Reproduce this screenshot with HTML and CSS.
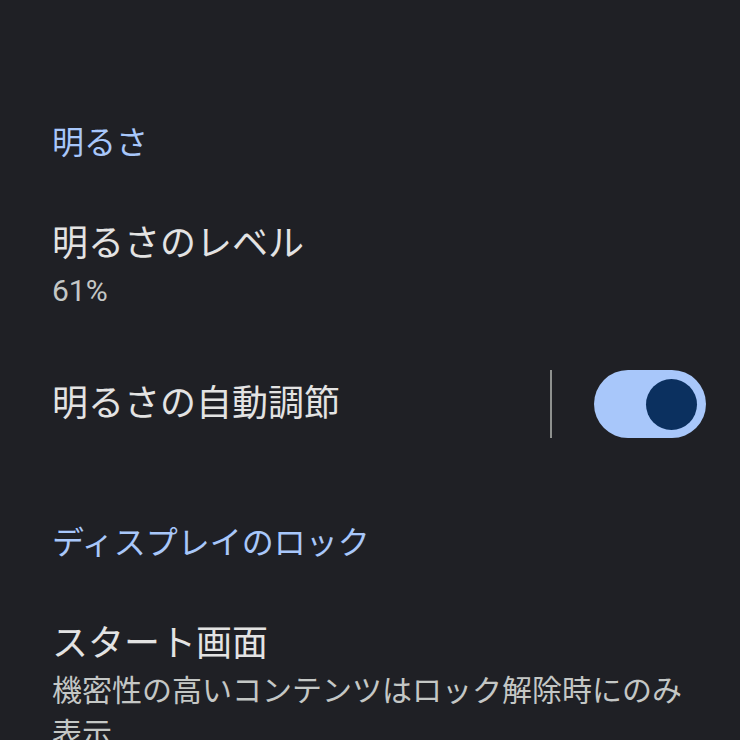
FILE: index.html
```html
<!DOCTYPE html>
<html lang="ja">
<head>
<meta charset="utf-8">
<title>ディスプレイ</title>
<link rel="stylesheet" href="styles.css">
</head>
<body>
<main class="settings">
  <h2 class="section-header">明るさ</h2>
  <div class="row">
    <div class="row-text">
      <div class="row-title">明るさのレベル</div>
      <div class="row-summary">61%</div>
    </div>
  </div>
  <div class="row">
    <div class="row-text">
      <div class="row-title">明るさの自動調節</div>
    </div>
    <div class="row-divider"></div>
    <div class="switch" role="switch" aria-checked="true">
      <div class="switch-thumb"></div>
    </div>
  </div>
  <h2 class="section-header section-header--spaced">ディスプレイのロック</h2>
  <div class="row">
    <div class="row-text">
      <div class="row-title">スタート画面</div>
      <div class="row-summary">機密性の高いコンテンツはロック解除時にのみ表示</div>
    </div>
  </div>
</main>
</body>
</html>
```
FILE: styles.css
```css
html, body {
  margin: 0;
  padding: 0;
  background: #1f2025;
}

body {
  font-family: Roboto, "Noto Sans CJK JP", sans-serif;
  color: #e3e3e3;
  overflow: hidden;
  height: 740px;
}

.settings {
  padding: 121px 34px 0 52px;
}

.section-header {
  margin: 0;
  font-size: 32px;
  line-height: 44px;
  font-weight: 400;
  color: #a8c7fa;
  padding-bottom: 25px;
}

.section-header--spaced {
  padding-top: 54px;
}

.row {
  display: flex;
  align-items: center;
  padding: 29px 0;
}

.row-text {
  flex: 1;
  min-width: 0;
}

.row-title {
  font-size: 36px;
  line-height: 50px;
  color: #e3e3e3;
}

.row-summary {
  font-size: 30px;
  line-height: 43px;
  color: #c4c7c5;
  padding-right: 20px;
}

.row-divider {
  width: 2px;
  height: 68px;
  background: #8e918f;
  margin: 0 42px 0 20px;
}

.switch {
  width: 112px;
  height: 68px;
  border-radius: 34px;
  background: #a8c7fa;
  display: flex;
  align-items: center;
  justify-content: flex-end;
  padding-right: 9px;
  box-sizing: border-box;
}

.switch-thumb {
  width: 51px;
  height: 51px;
  border-radius: 50%;
  background: #0b305f;
}
```
